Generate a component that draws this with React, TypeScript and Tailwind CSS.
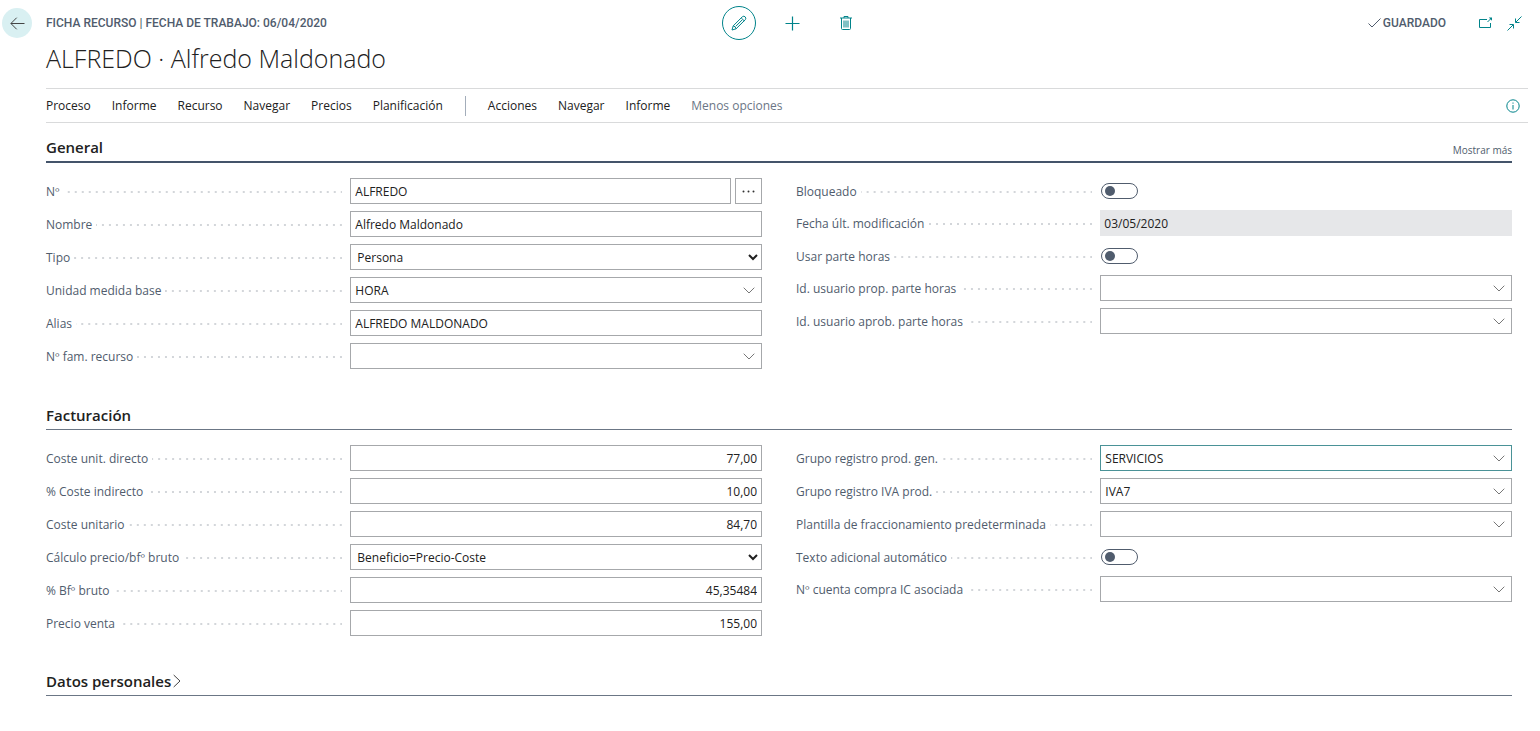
import { useId, useState } from 'react';
import type { ReactNode } from 'react';

const actions = ['Proceso', 'Informe', 'Recurso', 'Navegar', 'Precios', 'Planificación'];
const moreActions = ['Acciones', 'Navegar', 'Informe'];

// Label with the dotted leader that runs up to the control
function Row({ label, id, short, children }: { label: string; id: string; short?: boolean; children: ReactNode }) {
  return (
    <div className={short ? 'flex h-[25px] items-center' : 'flex h-[26px] items-center'}>
      <div className="flex w-[42.5%] shrink-0 items-center gap-1 pt-0.5 pr-2">
        <label htmlFor={id} className="whitespace-nowrap text-[#505c6d]">{label}</label>
        <span className="h-0.5 flex-1 bg-[linear-gradient(90deg,transparent_5px,#d3d6da_5px)] bg-[length:7px_2px] bg-right bg-repeat-x" />
      </div>
      <div className="flex h-full min-w-0 flex-1 items-center">{children}</div>
    </div>
  );
}

function TextField({ label, value, numeric, assist }: { label: string; value: string; numeric?: boolean; assist?: boolean }) {
  const id = useId();
  return (
    <Row label={label} id={id}>
      <input
        id={id}
        type="text"
        defaultValue={value}
        className={`h-full min-w-0 flex-1 border border-[#a6a8ab] px-1 outline-none focus:border-[#00838a] ${numeric ? 'text-right' : ''}`}
      />
      {assist && (
        <button type="button" aria-label="Asistente" className="ml-1 flex h-full w-[27px] items-center justify-center border border-[#a6a8ab]">
          <svg width="13" height="3" viewBox="0 0 13 3" fill="#333">
            <circle cx="1.5" cy="1.5" r="1" />
            <circle cx="6.5" cy="1.5" r="1" />
            <circle cx="11.5" cy="1.5" r="1" />
          </svg>
        </button>
      )}
    </Row>
  );
}

function LookupField({ label, value = '', active }: { label: string; value?: string; active?: boolean }) {
  const id = useId();
  return (
    <Row label={label} id={id}>
      <div className={`flex h-full min-w-0 flex-1 border ${active ? 'border-[#4a9297]' : 'border-[#a6a8ab]'}`}>
        <input id={id} type="text" defaultValue={value} className="min-w-0 flex-1 px-1 pt-px outline-none" />
        <button type="button" aria-label={`Buscar ${label}`} className="flex w-6 items-center justify-center">
          <svg width="12" height="7" viewBox="0 0 12 7" fill="none" stroke="#777" strokeWidth="1">
            <path d="M0.7 0.7 6 6 11.3 0.7" />
          </svg>
        </button>
      </div>
    </Row>
  );
}

function SelectField({ label, options }: { label: string; options: string[] }) {
  const id = useId();
  return (
    <Row label={label} id={id}>
      <select id={id} className="h-full min-w-0 flex-1 border border-[#a6a8ab] bg-white pl-0.5 outline-none">
        {options.map(o => <option key={o}>{o}</option>)}
      </select>
    </Row>
  );
}

function ToggleField({ label }: { label: string }) {
  const id = useId();
  const [on, setOn] = useState(false);
  return (
    <Row label={label} id={id} short>
      <input
        id={id}
        type="checkbox"
        role="switch"
        checked={on}
        onChange={e => setOn(e.target.checked)}
        className="ml-px flex h-4 w-[37px] appearance-none items-center rounded-full border border-[#505c6d] px-[3px] before:size-2.5 before:rounded-full before:bg-[#505c6d] checked:justify-end"
      />
    </Row>
  );
}

function ReadOnlyField({ label, value }: { label: string; value: string }) {
  const id = useId();
  return (
    <Row label={label} id={id}>
      <input id={id} type="text" readOnly value={value} className="h-full min-w-0 flex-1 bg-[#e6e7e9] px-1 outline-none" />
    </Row>
  );
}

function Columns({ left, right }: { left: ReactNode; right: ReactNode }) {
  return (
    <div className="grid grid-cols-2 items-start gap-x-[34px] pt-[15px]">
      <div className="flex flex-col gap-[7px]">{left}</div>
      <div className="flex flex-col gap-[7px]">{right}</div>
    </div>
  );
}

export default function App() {
  const [personalOpen, setPersonalOpen] = useState(false);

  return (
    <div className="bg-white pb-8 font-['Open_Sans','Noto_Sans',sans-serif] text-xs text-[#212121]">
      {/* Header */}
      <header className="grid grid-cols-[1fr_auto_1fr] items-center pt-1.5 pr-[18px] pl-0.5">
        <div className="flex items-center">
          <button type="button" aria-label="Atrás" className="flex size-[30px] items-center justify-center rounded-full bg-[#d9f0f2]">
            <svg width="15" height="13" viewBox="0 0 15 13" fill="none" stroke="#444" strokeWidth="1">
              <path d="M14.5 6.5H1M6.7 0.7 0.9 6.5 6.7 12.3" />
            </svg>
          </button>
          <span className="ml-3.5 font-['Roboto',sans-serif] font-medium text-[#505c6d]">
            FICHA RECURSO | FECHA DE TRABAJO: 06/04/2020
          </span>
        </div>

        <div className="flex items-center pl-[52px] text-[#00838a]">
          <button type="button" aria-label="Editar" className="flex size-[34px] items-center justify-center rounded-full border border-current">
            <svg width="16" height="16" viewBox="0 0 16 16" fill="none" stroke="currentColor" strokeWidth="1">
              <path d="M1 15 2.2 10.9 11.4 1.7Q12.9 0.6 14.2 1.9 15.4 3.1 14.4 4.6L5.1 13.8ZM2.2 10.9Q4.6 11.2 5.1 13.8M10.2 2.9 13.2 5.8M11.2 4.9 4.9 11.2" />
            </svg>
          </button>
          <button type="button" aria-label="Nuevo" className="ml-7 flex size-4 items-center justify-center">
            <svg width="15" height="15" viewBox="0 0 15 15" fill="none" stroke="currentColor" strokeWidth="1.2">
              <path d="M7.5 0.5V14.5M0.5 7.5H14.5" />
            </svg>
          </button>
          <button type="button" aria-label="Eliminar" className="ml-[38px] flex size-4 items-center justify-center">
            <svg width="12" height="16" viewBox="0 0 12 16" fill="none" stroke="currentColor" strokeWidth="1">
              <path d="M0 3H12M4 3V1.5H8V3M1.5 3V13.5Q1.5 14.5 2.5 14.5H9.5Q10.5 14.5 10.5 13.5V3M4 5.5V12.5M6 5.5V12.5M8 5.5V12.5" />
            </svg>
          </button>
        </div>

        <div className="flex items-center justify-end text-[#00838a]">
          <span className="flex items-center gap-0.5 font-['Roboto',sans-serif] font-medium text-[#505c6d]">
            <svg width="13" height="10" viewBox="0 0 13 10" fill="none" stroke="currentColor" strokeWidth="1">
              <path d="M0.5 5.5 4 9 12.5 0.5" />
            </svg>
            GUARDADO
          </span>
          <button type="button" aria-label="Abrir en ventana nueva" className="ml-8">
            <svg width="15" height="12" viewBox="0 0 15 12" fill="none" stroke="currentColor" strokeWidth="1">
              <path d="M9 2.5H1.5V10.5H12.5V6M9.5 5 13.5 1" />
              <path d="M10.8 0.5H14V3.7Z" fill="currentColor" stroke="none" />
            </svg>
          </button>
          <button type="button" aria-label="Contraer" className="ml-3.5">
            <svg width="15" height="15" viewBox="0 0 15 15" fill="none" stroke="currentColor" strokeWidth="1">
              <path d="M14.5 0.5 8.8 6.2M8.5 2.5V6.5H12.5M0.5 14.5 6.2 8.8M2.5 8.5H6.5V12.5" />
            </svg>
          </button>
        </div>
      </header>

      <h1 className="ml-[46px] text-[25px] leading-9 font-light">ALFREDO · Alfredo Maldonado</h1>

      {/* Action bar */}
      <nav className="mt-3 mr-3 ml-[46px] flex h-[35px] items-center border-y border-[#d9dadb]">
        <div className="flex gap-[21px]">
          {actions.map(a => <button type="button" key={a}>{a}</button>)}
        </div>
        <span className="mx-[22px] h-5 w-px bg-[#a3adba]" />
        <div className="flex gap-[21px]">
          {moreActions.map((a, i) => <button type="button" key={i}>{a}</button>)}
          <button type="button" className="text-[#6b7685]">Menos opciones</button>
        </div>
        <button type="button" aria-label="Información" className="mr-2 ml-auto text-[#00838a]">
          <svg width="14" height="14" viewBox="0 0 14 14" fill="none" stroke="currentColor" strokeWidth="1">
            <circle cx="7" cy="7" r="6.2" />
            <path d="M7 6V10.5M7 3.5V4.7" />
          </svg>
        </button>
      </nav>

      <main className="mr-7 ml-[46px]">
        <section>
          <div className="flex h-10 items-end justify-between border-b-2 border-[#44546a] pb-0.5">
            <h2 className="text-[15px] leading-6 font-semibold">General</h2>
            <button type="button" className="pb-px text-[10px] leading-4 text-[#505c6d]">Mostrar más</button>
          </div>
          <Columns
            left={
              <>
                <TextField label="Nº" value="ALFREDO" assist />
                <TextField label="Nombre" value="Alfredo Maldonado" />
                <SelectField label="Tipo" options={['Persona', 'Máquina']} />
                <LookupField label="Unidad medida base" value="HORA" />
                <TextField label="Alias" value="ALFREDO MALDONADO" />
                <LookupField label="Nº fam. recurso" />
              </>
            }
            right={
              <>
                <ToggleField label="Bloqueado" />
                <ReadOnlyField label="Fecha últ. modificación" value="03/05/2020" />
                <ToggleField label="Usar parte horas" />
                <LookupField label="Id. usuario prop. parte horas" />
                <LookupField label="Id. usuario aprob. parte horas" />
              </>
            }
          />
        </section>

        <section className="mt-[34px]">
          <h2 className="border-b border-[#6b7685] pb-0.5 text-[15px] leading-6 font-semibold">Facturación</h2>
          <Columns
            left={
              <>
                <TextField label="Coste unit. directo" value="77,00" numeric />
                <TextField label="% Coste indirecto" value="10,00" numeric />
                <TextField label="Coste unitario" value="84,70" numeric />
                <SelectField label="Cálculo precio/bfº bruto" options={['Beneficio=Precio-Coste', 'Precio=Coste+Beneficio', 'Sin relación']} />
                <TextField label="% Bfº bruto" value="45,35484" numeric />
                <TextField label="Precio venta" value="155,00" numeric />
              </>
            }
            right={
              <>
                <LookupField label="Grupo registro prod. gen." value="SERVICIOS" active />
                <LookupField label="Grupo registro IVA prod." value="IVA7" />
                <LookupField label="Plantilla de fraccionamiento predeterminada" />
                <ToggleField label="Texto adicional automático" />
                <LookupField label="Nº cuenta compra IC asociada" />
              </>
            }
          />
        </section>

        <section className="mt-[33px]">
          <h2 className="border-b border-[#6b7685] pb-0.5 text-[15px] leading-6 font-semibold">
            <button type="button" aria-expanded={personalOpen} onClick={() => setPersonalOpen(!personalOpen)} className="flex items-center gap-0.5">
              Datos personales
              <svg width="8" height="14" viewBox="0 0 8 14" fill="none" stroke="#444" strokeWidth="1">
                <path d="M0.7 1 7 7 0.7 13" />
              </svg>
            </button>
          </h2>
        </section>
      </main>
    </div>
  );
}
